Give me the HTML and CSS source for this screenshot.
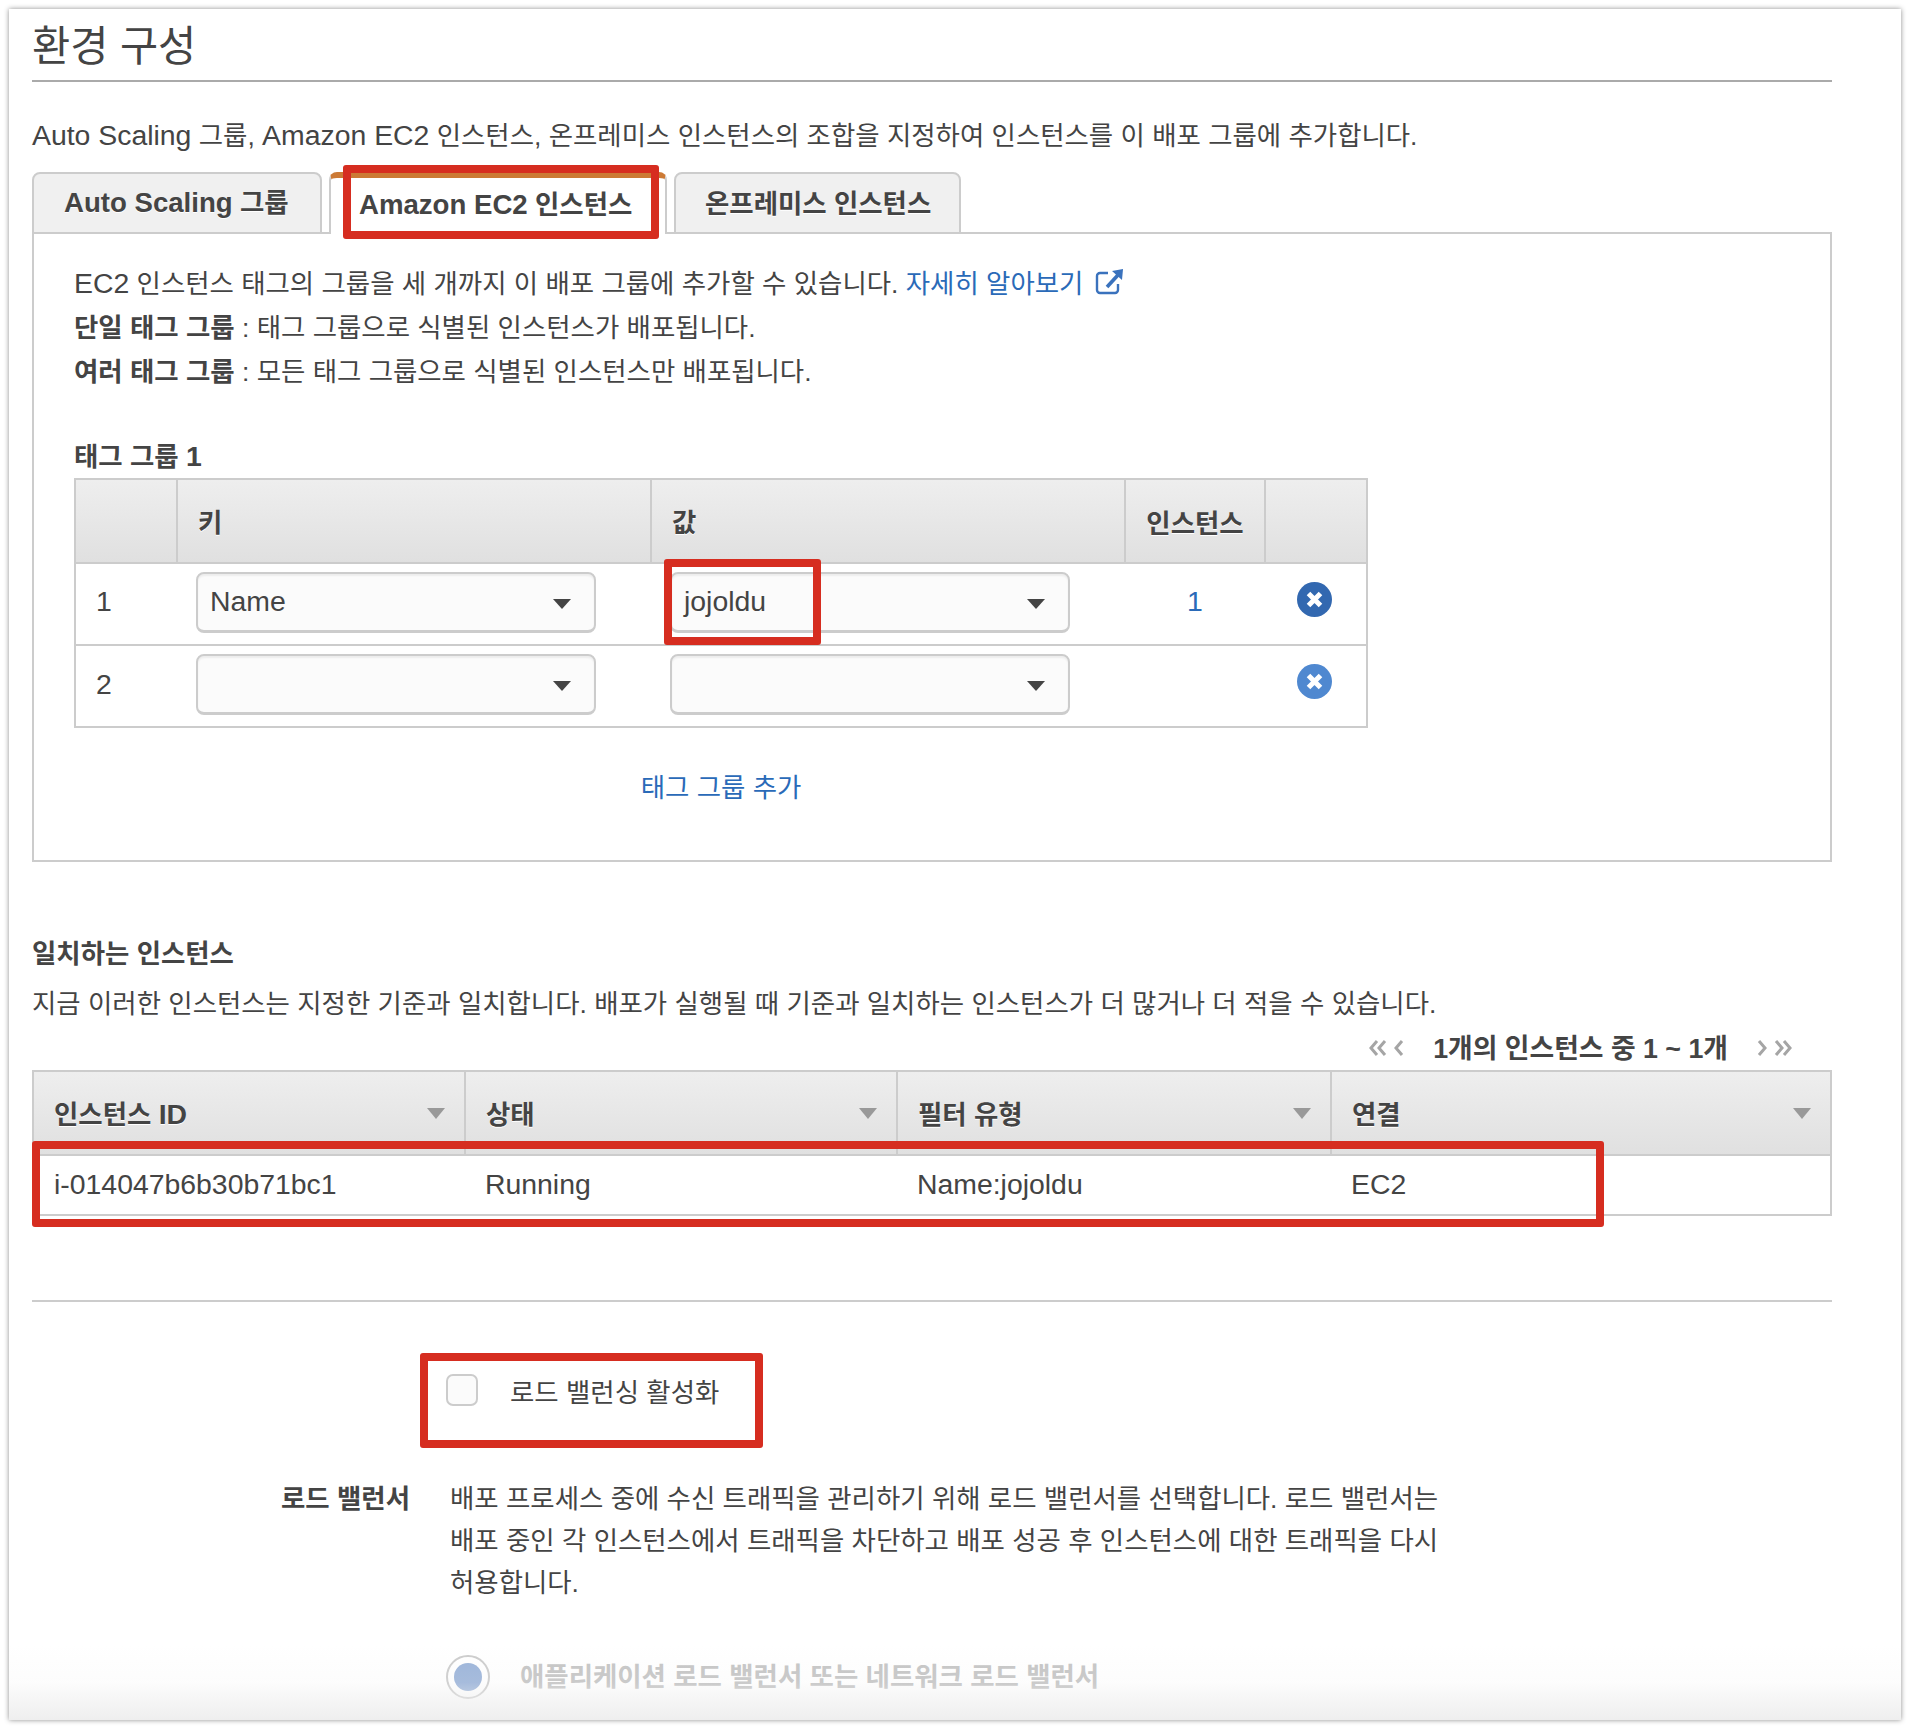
FILE: index.html
```html
<!DOCTYPE html>
<html lang="ko">
<head>
<meta charset="utf-8">
<title>환경 구성</title>
<link rel="stylesheet" href="styles.css">
</head>
<body>
<main class="card">
  <h1 class="title">환경 구성</h1>
  <p class="intro"><span class="en">Auto Scaling</span> 그룹, <span class="en">Amazon EC2</span> 인스턴스, 온프레미스 인스턴스의 조합을 지정하여 인스턴스를 이 배포 그룹에 추가합니다.</p>

  <div class="tabs">
    <div class="tab tab-a"><span class="en">Auto Scaling</span> 그룹</div>
    <div class="tab tab-b active"><span class="en">Amazon EC2</span> 인스턴스</div>
    <div class="tab tab-c">온프레미스 인스턴스</div>
  </div>
  <section class="panel">
    <p class="line"><span class="en">EC2</span> 인스턴스 태그의 그룹을 세 개까지 이 배포 그룹에 추가할 수 있습니다. <a class="link">자세히 알아보기</a>
      <svg class="ext" viewBox="0 0 29 26" width="29" height="26"><path d="M13 4H5a3 3 0 0 0-3 3v14a3 3 0 0 0 3 3h15a3 3 0 0 0 3-3v-6" fill="none" stroke="#3a72bd" stroke-width="2.4"/><path d="M12 18L23 6" fill="none" stroke="#3a72bd" stroke-width="3.6"/><path d="M17 2l11-2-1 11z" fill="#3a72bd"/></svg></p>
    <p class="line"><b>단일 태그 그룹</b> : 태그 그룹으로 식별된 인스턴스가 배포됩니다.</p>
    <p class="line"><b>여러 태그 그룹</b> : 모든 태그 그룹으로 식별된 인스턴스만 배포됩니다.</p>
    <h2 class="group-title">태그 그룹 <span class="en">1</span></h2>
    <table class="tbl tag-tbl">
      <colgroup><col class="c-num"><col class="c-kv"><col class="c-kv"><col class="c-inst"><col class="c-end"></colgroup>
      <thead><tr><th></th><th>키</th><th>값</th><th class="center">인스턴스</th><th></th></tr></thead>
      <tbody>
        <tr class="row-a">
          <td class="num"><span class="en">1</span></td>
          <td><div class="select"><span class="en">Name</span><i class="caret"></i></div></td>
          <td><div class="select"><span class="en">jojoldu</span><i class="caret"></i></div></td>
          <td class="center count"><a class="link en">1</a></td>
          <td class="rm"><svg viewBox="0 0 35 35" width="35" height="35"><circle cx="17.5" cy="17.5" r="17.5" fill="#3268b0"/><path d="M11.5 11.5l12 12M23.5 11.5l-12 12" stroke="#fff" stroke-width="5"/></svg></td>
        </tr>
        <tr class="row-b">
          <td class="num"><span class="en">2</span></td>
          <td><div class="select"><i class="caret"></i></div></td>
          <td><div class="select"><i class="caret"></i></div></td>
          <td></td>
          <td class="rm"><svg viewBox="0 0 35 35" width="35" height="35"><circle cx="17.5" cy="17.5" r="17.5" fill="#4f88d0"/><path d="M11.5 11.5l12 12M23.5 11.5l-12 12" stroke="#fff" stroke-width="5"/></svg></td>
        </tr>
      </tbody>
    </table>
    <div class="add-row"><a class="link">태그 그룹 추가</a></div>
  </section>

  <h2 class="match-title">일치하는 인스턴스</h2>
  <p class="match-desc">지금 이러한 인스턴스는 지정한 기준과 일치합니다. 배포가 실행될 때 기준과 일치하는 인스턴스가 더 많거나 더 적을 수 있습니다.</p>
  <div class="pager">
    <svg class="chev" viewBox="0 0 36 16" width="36" height="16"><path d="M8 1L2 8l6 7M16 1l-6 7 6 7M33 1l-6 7 6 7" fill="none" stroke="#a5a5a5" stroke-width="3"/></svg>
    <b class="pager-text">1개의 인스턴스 중 1 ~ 1개</b>
    <svg class="chev" viewBox="0 0 36 16" width="36" height="16"><path d="M3 1l6 7-6 7M20 1l6 7-6 7M28 1l6 7-6 7" fill="none" stroke="#a5a5a5" stroke-width="3"/></svg>
  </div>
  <table class="tbl inst-tbl">
    <colgroup><col class="c-1"><col class="c-2"><col class="c-3"><col class="c-4"></colgroup>
    <thead><tr>
      <th><span class="th-in">인스턴스 <span class="en">ID</span><i class="sort"></i></span></th>
      <th><span class="th-in">상태<i class="sort"></i></span></th>
      <th><span class="th-in">필터 유형<i class="sort"></i></span></th>
      <th><span class="th-in">연결<i class="sort"></i></span></th>
    </tr></thead>
    <tbody><tr><td><span class="en">i-014047b6b30b71bc1</span></td><td><span class="en">Running</span></td><td><span class="en">Name:jojoldu</span></td><td><span class="en">EC2</span></td></tr></tbody>
  </table>

  <hr class="rule">

  <label class="check-row"><span class="checkbox"></span><span class="check-label">로드 밸런싱 활성화</span></label>
  <div class="lb-row">
    <b class="lb-label">로드 밸런서</b>
    <p class="lb-desc">배포 프로세스 중에 수신 트래픽을 관리하기 위해 로드 밸런서를 선택합니다. 로드 밸런서는 배포 중인 각 인스턴스에서 트래픽을 차단하고 배포 성공 후 인스턴스에 대한 트래픽을 다시 허용합니다.</p>
  </div>
  <div class="radio-row"><span class="radio"><span class="radio-dot"></span></span><b class="radio-label">애플리케이션 로드 밸런서 또는 네트워크 로드 밸런서</b></div>

  <div class="fade"></div>
  <div class="mark mark-tab"></div>
  <div class="mark mark-val"></div>
  <div class="mark mark-row"></div>
  <div class="mark mark-check"></div>
</main>
</body>
</html>
```
FILE: styles.css
```css
* { box-sizing: border-box; }
html, body { margin: 0; padding: 0; background: #fff; }
body { padding: 9px; font-family: "Liberation Sans", "Noto Sans CJK KR", sans-serif; font-size: 26.45px; color: #444; }
p, h1, h2 { margin: 0; }
.en { font-size: 28.4px; line-height: 0; }
.tab .en { font-size: 27.6px; }
.card { position: relative; width: 1892px; height: 1711px; padding: 0 0 0 23px; overflow: hidden; background: #fff; box-shadow: 0 0 5px rgba(0,0,0,.45); }
.card > * { width: 1800px; }
.title { height: 73px; line-height: 76px; font-size: 41.5px; font-weight: 400; border-bottom: 2px solid #aaa; }
.intro { margin-top: 33px; line-height: 42px; white-space: nowrap; }
.tabs { display: flex; gap: 7px; height: 60px; margin-top: 15px; position: relative; z-index: 1; }
.tab { height: 62px; line-height: 58px; padding: 0 30px; font-weight: 700; background: #f0f0f0; border: 2px solid #ccc; border-radius: 8px 8px 0 0; text-shadow: 0 1px 0 #fff; white-space: nowrap; }
.tab-a { width: 290px; }
.tab-b { width: 338px; padding: 0 28px; }
.tab-c { width: 287px; padding: 0 29px; line-height: 60px; }
.tab.active { background: #fff; border-top: 6px solid #cc7a35; border-bottom: 0; line-height: 54px; }
.panel { height: 630px; padding: 28px 0 0 40px; border: 2px solid #ccc; }
.line { line-height: 44px; white-space: nowrap; }
.link { color: #2a6ab8; }
.ext { vertical-align: -2px; margin-left: 4px; }
.group-title { margin-top: 42px; font-size: 26.45px; line-height: 42px; }
.tbl { border-collapse: separate; border-spacing: 0; table-layout: fixed; border: 2px solid #ccc; }
.tbl th { padding: 0 20px; text-align: left; font-weight: 700; background: linear-gradient(#eeeeee, #e0e0e0); border-right: 2px solid #ccc; border-bottom: 2px solid #ccc; text-shadow: 0 1px 0 #fff; }
.tbl th:last-child { border-right: 0; }
.tbl th.center, .tbl td.center { text-align: center; padding: 0; }
.tag-tbl { width: 1294px; }
.tag-tbl th { height: 84px; padding-bottom: 2px; }
.c-num { width: 102px; }
.c-kv { width: 474px; }
.c-inst { width: 140px; }
.c-end { width: 100px; }
.tag-tbl td { padding: 8px 18px 0; vertical-align: top; border-bottom: 2px solid #ccc; }
.tag-tbl tr:last-child td { border-bottom: 0; }
.row-a td { height: 82px; }
.row-b td { height: 80px; }
.tag-tbl td.num { padding: 0 0 3px 20px; vertical-align: middle; }
.row-b td.num { padding-bottom: 1px; }
.tag-tbl td.count { padding: 0 2px 3px 0; vertical-align: middle; }
.tag-tbl td.rm { padding: 18px 0 0 31px; }
.rm svg { display: block; }
.select { position: relative; width: 400px; height: 61px; padding-left: 12px; line-height: 56px; background: #fbfbfb; border: 2px solid #ccc; border-bottom-width: 3px; border-radius: 8px; box-shadow: inset 0 2px 2px rgba(0,0,0,.06); }
.caret { position: absolute; right: 23px; top: 25px; width: 0; height: 0; border-left: 9px solid transparent; border-right: 9px solid transparent; border-top: 10px solid #444; }
.add-row { width: 1294px; margin-top: 38px; line-height: 44px; text-align: center; }
.match-title { margin-top: 70px; font-size: 26.45px; line-height: 44px; }
.match-desc { margin-top: 6px; line-height: 44px; white-space: nowrap; }
.pager { display: flex; justify-content: flex-end; align-items: center; gap: 28px; height: 44px; padding-right: 40px; }
.chev { display: block; }
.pager-text { font-size: 26.8px; margin-bottom: 3px; }
.inst-tbl { width: 1800px; }
.c-1 { width: 432px; }
.c-2 { width: 432px; }
.c-3 { width: 434px; }
.c-4 { width: 498px; }
.inst-tbl th { height: 84px; padding-bottom: 2px; }
.inst-tbl td { height: 58px; padding: 0 19px; }
.inst-tbl td:first-child { padding-left: 20px; }
.th-in { position: relative; display: block; }
.sort { position: absolute; right: -1px; top: 15px; width: 0; height: 0; border-left: 9px solid transparent; border-right: 9px solid transparent; border-top: 11px solid #999; }
.rule { height: 2px; margin: 84px 0 0; border: 0; background: #ccc; }
.check-row { display: flex; align-items: center; gap: 32px; margin-top: 72px; padding-left: 414px; height: 32px; }
.checkbox { width: 32px; height: 32px; background: #fbfbfb; border: 2px solid #ccc; border-radius: 7px; }
.lb-row { display: flex; gap: 40px; margin-top: 72px; line-height: 42px; }
.lb-label { width: 378px; text-align: right; }
.lb-desc { width: 1000px; }
.radio-row { display: flex; align-items: center; gap: 30px; margin-top: 51px; padding-left: 414px; height: 44px; color: #c4c4c4; }
.radio-label { margin-bottom: 5px; }
.radio { display: flex; align-items: center; justify-content: center; width: 44px; height: 44px; background: #fff; border: 2px solid #ccc; border-radius: 50%; }
.radio-dot { width: 28px; height: 28px; border-radius: 50%; background: #9ab3d9; }
.fade { position: absolute; left: 0; bottom: 0; width: 100% !important; height: 75px; background: linear-gradient(rgba(238,238,238,0), rgba(238,238,238,.15) 50%, rgba(238,238,238,1)); }
.mark { position: absolute; z-index: 5; border: 8px solid #d62d20; border-radius: 3px; }
.mark-tab { left: 334px; top: 156px; width: 316px; height: 74px; }
.mark-val { left: 655px; top: 550px; width: 157px; height: 86px; }
.mark-row { left: 23px; top: 1132px; width: 1572px; height: 86px; }
.mark-check { left: 411px; top: 1344px; width: 343px; height: 95px; }
```
